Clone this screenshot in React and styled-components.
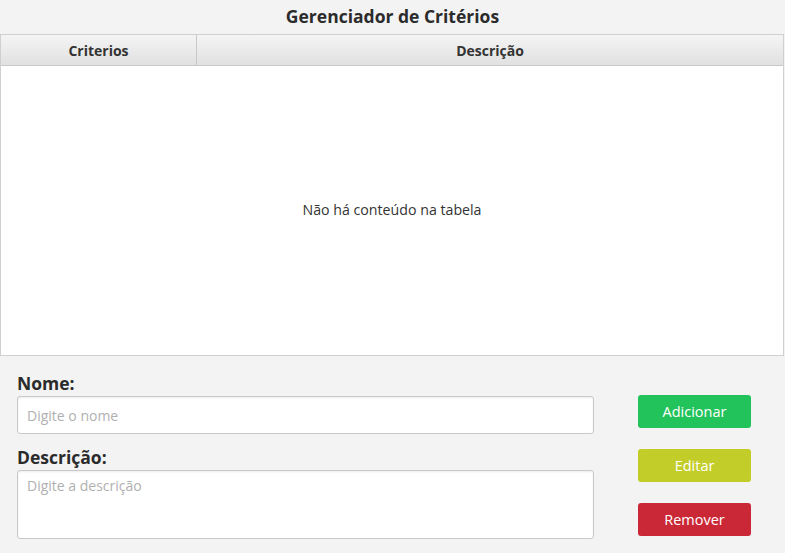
import styled, { createGlobalStyle } from 'styled-components';

const GlobalStyle = createGlobalStyle`
  html, body {
    margin: 0;
    padding: 0;
    background: #f3f3f3;
  }
  body {
    font-family: 'Open Sans', 'Noto Sans', sans-serif;
    color: #333;
  }
  * {
    box-sizing: border-box;
  }
`;

const Page = styled.div`
  width: 785px;
  height: 553px;
  display: flex;
  flex-direction: column;
  background: #f3f3f3;
`;

const Title = styled.h1`
  margin: 0;
  height: 34px;
  padding-bottom: 2px;
  display: flex;
  align-items: center;
  justify-content: center;
  font-size: 17.5px;
  font-weight: 700;
  color: #2b2b2b;
`;

const Table = styled.div`
  width: 784px;
  height: 322px;
  border: 1px solid #cfcfcf;
  background: #fff;
  display: flex;
  flex-direction: column;
`;

const HeaderRow = styled.div`
  display: grid;
  grid-template-columns: 196px 1fr;
  height: 31px;
  background: linear-gradient(#f4f4f4, #e1e1e1);
  border-bottom: 1px solid #c8c8c8;
`;

const HeaderCell = styled.div`
  display: flex;
  align-items: center;
  justify-content: center;
  font-size: 14px;
  font-weight: 700;
  color: #333;
  border-right: ${(p) => (p.last ? 'none' : '1px solid #c8c8c8')};
`;

const Empty = styled.div`
  flex: 1;
  display: flex;
  align-items: center;
  justify-content: center;
  font-size: 14.2px;
  color: #333;
  padding-bottom: 2px;
`;

const Form = styled.div`
  display: grid;
  grid-template-columns: 577px 1fr;
  column-gap: 44px;
  padding: 16px 0 0 17px;
`;

const Fields = styled.div`
  display: flex;
  flex-direction: column;
`;

const Label = styled.label`
  font-size: 17.5px;
  font-weight: 700;
  color: #2b2b2b;
  line-height: 22px;
  margin-bottom: 2px;
  margin-top: ${(p) => p.gap || 0}px;
`;

const Input = styled.input`
  height: 38px;
  border: 1px solid #c9c9c9;
  border-radius: 3px;
  background: #fff;
  box-shadow: inset 0 1px 2px rgba(0, 0, 0, 0.08);
  padding: 0 9px;
  font-family: inherit;
  font-size: 14px;
  outline: none;
  &::placeholder {
    color: #b0b0b0;
  }
`;

const TextArea = styled.textarea`
  height: 69px;
  border: 1px solid #c9c9c9;
  border-radius: 3px;
  background: #fff;
  box-shadow: inset 0 1px 2px rgba(0, 0, 0, 0.08);
  padding: 5px 9px;
  font-family: inherit;
  font-size: 14px;
  resize: none;
  outline: none;
  &::placeholder {
    color: #b0b0b0;
  }
`;

const Actions = styled.div`
  display: flex;
  flex-direction: column;
  gap: 21px;
  padding-top: 23px;
`;

const Button = styled.button`
  width: 113px;
  height: 33px;
  border: none;
  border-radius: 3px;
  background: ${(p) => p.color};
  color: #fff;
  font-family: inherit;
  font-size: 14.5px;
  cursor: pointer;
`;

const App = () => {
  return (
    <Page>
      <GlobalStyle />
      <Title>Gerenciador de Critérios</Title>
      <Table>
        <HeaderRow>
          <HeaderCell>Criterios</HeaderCell>
          <HeaderCell last>Descrição</HeaderCell>
        </HeaderRow>
        <Empty>Não há conteúdo na tabela</Empty>
      </Table>
      <Form>
        <Fields>
          <Label>Nome:</Label>
          <Input placeholder="Digite o nome" />
          <Label gap={12}>Descrição:</Label>
          <TextArea placeholder="Digite a descrição" />
        </Fields>
        <Actions>
          <Button color="#22c35b">Adicionar</Button>
          <Button color="#c3cd29">Editar</Button>
          <Button color="#cb2837">Remover</Button>
        </Actions>
      </Form>
    </Page>
  );
};

export default App;
